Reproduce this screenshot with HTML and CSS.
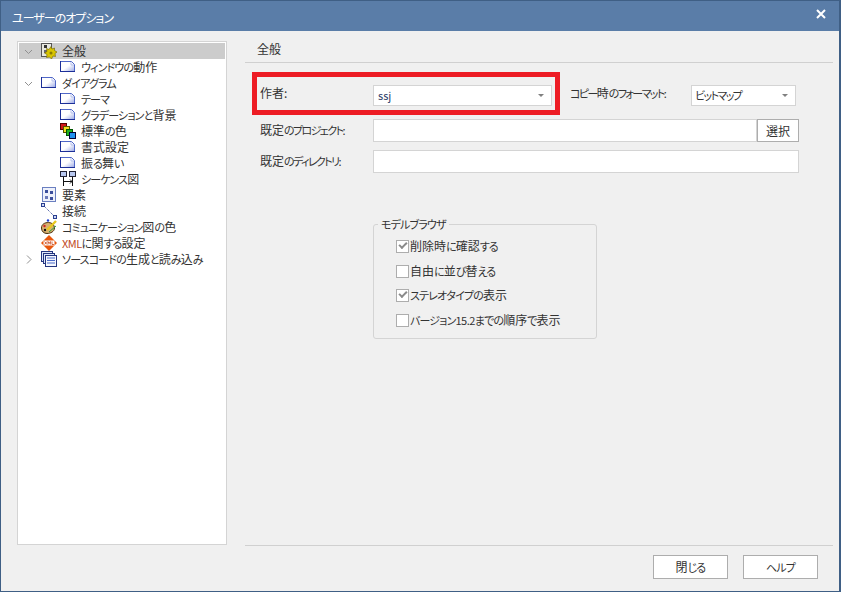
FILE: index.html
```html
<!DOCTYPE html>
<html lang="ja">
<head>
  <meta charset="UTF-8" />
  <title>ユーザーのオプション</title>
  <link rel="stylesheet" href="styles.css">
</head>
<body>

  <svg class="defs" width="0" height="0">
    <defs>
      <linearGradient id="pageFill" x1="0" y1="0" x2="1" y2="1">
        <stop offset="0.5" stop-color="#ffffff"/>
        <stop offset="1" stop-color="#98a6e4"/>
      </linearGradient>
      <symbol id="page" viewBox="0 0 16 16">
        <path d="M0.5 2.5H11.5L14.5 5.5V12.5H0.5Z" fill="url(#pageFill)" stroke="#5068c8"/>
        <path d="M0.5 2V13M0 12.5H15" stroke="#1c2f98"/>
        <path d="M11 3V6H14" fill="none" stroke="#b4c0ee"/>
      </symbol>
      <symbol id="general" viewBox="0 0 16 16">
        <rect x="0.5" y="0.5" width="10" height="13" fill="#e8e8e0" stroke="#555"/>
        <rect x="3" y="2" width="3" height="3" fill="#333"/>
        <rect x="3" y="7" width="3" height="3" fill="#667"/>
        <path d="M10 3.5L11 6L13.5 5L13.5 7.5L16 9L14 10.5L14.5 13.5L12 13L10.5 16L8.5 14L5.5 14.5L6 11.5L3.5 10L6 8.5L5.5 5.5L8 6.5Z" fill="#d8c400" stroke="#6b6000" stroke-width="0.6"/>
        <circle cx="10" cy="10" r="1.5" fill="#8a7c00"/>
      </symbol>
      <symbol id="colors" viewBox="0 0 16 16">
        <rect x="0.5" y="0.5" width="6" height="6" fill="#d01818" stroke="#500"/>
        <rect x="3.5" y="3.5" width="6" height="6" fill="#f0e020" stroke="#550"/>
        <rect x="6.5" y="6.5" width="6" height="6" fill="#20b020" stroke="#050"/>
        <rect x="9.5" y="9.5" width="6" height="6" fill="#2090f0" stroke="#003"/>
      </symbol>
      <symbol id="sequence" viewBox="0 0 16 16">
        <rect x="0.5" y="0.5" width="6" height="5" fill="#b8c8f0" stroke="#223"/>
        <rect x="9.5" y="0.5" width="6" height="5" fill="#b8c8f0" stroke="#223"/>
        <path d="M3.5 6V15M12.5 6V15M4 10.5H12M10 8.5L12 10.5L10 12.5" fill="none" stroke="#111"/>
      </symbol>
      <symbol id="element" viewBox="0 0 16 16">
        <rect x="1.5" y="0.5" width="13" height="14" fill="#eef1fb" stroke="#6a7fc0"/>
        <rect x="4" y="3" width="3" height="3" fill="#3c4f9c"/>
        <rect x="9" y="4" width="3" height="3" fill="#3c4f9c"/>
        <rect x="4" y="9" width="3" height="3" fill="#6a78b8"/>
        <rect x="9" y="10" width="3" height="3" fill="#3c4f9c"/>
      </symbol>
      <symbol id="connector" viewBox="0 0 16 16">
        <path d="M3 3L13 13" stroke="#2a3f90" stroke-dasharray="1 1"/>
        <rect x="0.5" y="0.5" width="3" height="3" fill="#cfd8f5" stroke="#2a3f90"/>
        <rect x="12.5" y="12.5" width="3" height="3" fill="#cfd8f5" stroke="#2a3f90"/>
      </symbol>
      <symbol id="palette" viewBox="0 0 16 16">
        <path d="M0.5 9C0.5 5 4 3.5 7.5 3.5C11 3.5 13.5 6 13.5 9C13.5 12.5 9.5 14.5 6 14.5C3 14.5 0.5 12.5 0.5 9Z" fill="#d8b070" stroke="#4a3210"/>
        <circle cx="3.5" cy="7" r="1.2" fill="#d02020"/>
        <circle cx="7" cy="1.5" r="1.2" fill="#2040d0"/>
        <circle cx="4" cy="11" r="1.2" fill="#111"/>
        <path d="M6 11L15 2" stroke="#e8c820" stroke-width="2.4"/>
        <path d="M8 13L15 7" stroke="#30a040"/>
      </symbol>
      <symbol id="xml" viewBox="0 0 16 16">
        <path d="M8 0L16 8L8 16L0 8Z" fill="#e8560c"/>
        <path d="M2.5 5.5H13.5V10.5H2.5Z" fill="#fff"/>
        <path d="M3.5 6.5L6 9.5M6 6.5L3.5 9.5M7 9.5V6.5L8.2 8.5L9.4 6.5V9.5M11 6.5V9.5H13" stroke="#c03000" stroke-width="0.7" fill="none"/>
      </symbol>
      <symbol id="source" viewBox="0 0 16 16">
        <rect x="0.5" y="0.5" width="11" height="10" fill="#dfe6f8" stroke="#24357f"/>
        <rect x="2.5" y="2.5" width="11" height="10" fill="#dfe6f8" stroke="#24357f"/>
        <rect x="4.5" y="4.5" width="11" height="11" fill="#f4f6fd" stroke="#24357f"/>
        <path d="M6 7H14M6 9.5H14M6 12H14" stroke="#4a6ac8"/>
      </symbol>
      <symbol id="open" viewBox="0 0 9 9">
        <path d="M1 3L4.5 6.5L8 3" fill="none" stroke="#909090"/>
      </symbol>
      <symbol id="closed" viewBox="0 0 9 9">
        <path d="M3 0.5L7 4.5L3 8.5" fill="none" stroke="#909090"/>
      </symbol>
    </defs>
  </svg>

  <div class="window">
    <div class="titlebar">
      <span class="title">ユーザーのオプション</span>
      <svg class="close" width="10" height="10" viewBox="0 0 10 10"><path d="M1 1L9 9M9 1L1 9" stroke="#fff" stroke-width="2"/></svg>
    </div>

    <div class="content">
      <ul class="tree">
        <li class="node selected"><svg class="arrow"><use href="#open"/></svg><svg class="icon"><use href="#general"/></svg>全般</li>
        <li class="node child"><svg class="icon"><use href="#page"/></svg><span><span class="k">ウィンドウの</span>動作</span></li>
        <li class="node"><svg class="arrow"><use href="#open"/></svg><svg class="icon"><use href="#page"/></svg><span class="k">ダイアグラム</span></li>
        <li class="node child"><svg class="icon"><use href="#page"/></svg><span class="k">テーマ</span></li>
        <li class="node child"><svg class="icon"><use href="#page"/></svg><span><span class="k">グラデーションと</span>背景</span></li>
        <li class="node child"><svg class="icon"><use href="#colors"/></svg><span>標準<span class="k">の</span>色</span></li>
        <li class="node child"><svg class="icon"><use href="#page"/></svg>書式設定</li>
        <li class="node child"><svg class="icon"><use href="#page"/></svg><span>振<span class="k">る</span>舞<span class="k">い</span></span></li>
        <li class="node child"><svg class="icon"><use href="#sequence"/></svg><span><span class="k">シーケンス</span>図</span></li>
        <li class="node leaf"><svg class="icon"><use href="#element"/></svg>要素</li>
        <li class="node leaf"><svg class="icon"><use href="#connector"/></svg>接続</li>
        <li class="node leaf"><svg class="icon"><use href="#palette"/></svg><span><span class="k">コミュニケーション</span>図<span class="k">の</span>色</span></li>
        <li class="node leaf"><svg class="icon"><use href="#xml"/></svg><span><span class="xml">XML</span><span class="k">に</span>関<span class="k">する</span>設定</span></li>
        <li class="node"><svg class="arrow"><use href="#closed"/></svg><svg class="icon"><use href="#source"/></svg><span><span class="k">ソースコードの</span>生成<span class="k">と</span>読<span class="k">み</span>込<span class="k">み</span></span></li>
      </ul>

      <div class="panel">
        <h2 class="panel-title">全般</h2>

        <div class="top-row">
          <div class="author-box">
            <label class="author-label">作者:</label>
            <div class="combo author-combo">ssj<span class="caret"></span></div>
          </div>
          <label class="format-label"><span class="k tight">コピー</span>時<span class="k tight">のフォーマット:</span></label>
          <div class="combo format-combo"><span class="k tight">ビットマップ</span><span class="caret"></span></div>
        </div>

        <div class="field project-field">
          <label>既定<span class="k tight">のプロジェクト:</span></label>
          <div class="input"></div>
          <button class="pick">選択</button>
        </div>

        <div class="field dir-field">
          <label>既定<span class="k tight">のディレクトリ:</span></label>
          <div class="input"></div>
        </div>

        <fieldset class="group">
          <legend><span class="k">モデルブラウザ</span></legend>
          <div class="check on">削除時<span class="k">に</span>確認<span class="k">する</span></div>
          <div class="check">自由<span class="k">に</span>並<span class="k">び</span>替<span class="k">える</span></div>
          <div class="check on"><span class="k">ステレオタイプの</span>表示</div>
          <div class="check"><span class="k">バージョン</span><span class="num">15.2</span><span class="k">までの</span>順序<span class="k">で</span>表示</div>
        </fieldset>

        <div class="footer">
          <button class="btn">閉<span class="k">じる</span></button>
          <button class="btn"><span class="k">ヘルプ</span></button>
        </div>
      </div>
    </div>
  </div>

</body>
</html>
```

FILE: styles.css
```css
* {
  margin: 0;
  padding: 0;
  box-sizing: border-box;
}

body {
  font-family: "Noto Sans CJK JP", "Noto Sans", sans-serif;
  font-size: 12px;
  line-height: 16px;
  font-feature-settings: "palt";
  color: #333;
  background: #f0f0f0;
  overflow: hidden;
}

.defs {
  position: absolute;
}

/* kana runs are set narrower than the kanji */
.k {
  font-size: 11px;
  letter-spacing: -0.85px;
}

.k.tight {
  letter-spacing: -1.6px;
}

.num {
  font-size: 11px;
  letter-spacing: -0.5px;
}

.window {
  width: 841px;
  height: 592px;
  display: flex;
  flex-direction: column;
  border: 1px solid #3f5f85;
  border-right-width: 2px;
  background: #f0f0f0;
}

.titlebar {
  height: 30px;
  flex: none;
  display: flex;
  align-items: center;
  justify-content: space-between;
  padding: 4px 13px 0 11px;
  background: #5a7da8;
  color: #fff;
}

.title {
  letter-spacing: -1px;
}

.close {
  margin-top: -9px;
}

.content {
  flex: 1;
  display: flex;
  padding: 10px 6px 0 16px;
}

/* tree on the left */
.tree {
  width: 210px;
  height: 504px;
  flex: none;
  list-style: none;
  padding: 1px;
  background: #fff;
  border: 1px solid #d4d4d4;
}

.node {
  height: 16px;
  display: flex;
  align-items: center;
  white-space: nowrap;
  padding-left: 5px;
}

.node.selected {
  background: #ccc;
}

.node.child {
  padding-left: 41px;
}

.node.leaf {
  padding-left: 22px;
}

.arrow {
  width: 9px;
  height: 9px;
  flex: none;
  margin-right: 8px;
}

.icon {
  width: 16px;
  height: 16px;
  margin-right: 5px;
  flex: none;
}

.xml {
  color: #c0481c;
  font-size: 11px;
  letter-spacing: -0.5px;
}

/* right panel */
.panel {
  width: 588px;
  margin-left: 18px;
  display: flex;
  flex-direction: column;
}

.panel-title {
  height: 22px;
  padding-left: 12px;
  font-size: 12px;
  font-weight: normal;
  border-bottom: 1px solid #d0d0d0;
}

.top-row {
  display: flex;
  align-items: flex-start;
  margin: 9px 0 0 7px;
}

.author-box {
  width: 308px;
  height: 43px;
  display: flex;
  align-items: center;
  border: 5px solid #ed1c24;
  padding: 3px 0 0 3px;
}

.author-label {
  width: 113px;
  margin-top: -4px;
}

.combo {
  position: relative;
  height: 21px;
  background: #fff;
  border: 1px solid #d4d4d4;
  padding: 1px 0 0 4px;
  font-size: 11px;
}

.author-combo {
  width: 179px;
  color: #2a3a66;
}

.caret {
  position: absolute;
  right: 7px;
  top: 8px;
  border: 3px solid transparent;
  border-top: 3px solid #808080;
  border-bottom: 0;
}

.format-label {
  width: 121px;
  margin: 13px 0 0 10px;
  white-space: nowrap;
}

.format-combo {
  width: 105px;
  margin-top: 13px;
  padding-left: 3px;
}

.field {
  display: flex;
  align-items: center;
  margin-left: 15px;
  height: 23px;
}

.field label {
  width: 113px;
  flex: none;
  margin-top: -2px;
  white-space: nowrap;
}

.input {
  height: 23px;
  background: #fff;
  border: 1px solid #d4d4d4;
}

.project-field {
  margin-top: 4px;
}

.project-field .input {
  width: 384px;
}

.pick {
  width: 42px;
  height: 23px;
  font: inherit;
  color: #333;
  background: #fff;
  border: 1px solid #adadad;
}

.dir-field {
  margin-top: 8px;
}

.dir-field .input {
  width: 426px;
}

.group {
  width: 224px;
  height: 123px;
  margin: 43px 0 0 128px;
  padding: 6px 0 0 22px;
  border: 1px solid #d4d4d4;
  border-radius: 3px;
}

.group legend {
  margin-left: -18px;
  padding: 0 3px;
}

.check {
  position: relative;
  height: 24.5px;
  padding-left: 14px;
  white-space: nowrap;
}

.check::before {
  content: "";
  position: absolute;
  left: 0;
  top: 2px;
  width: 11px;
  height: 11px;
  background: #fff;
  border: 1px solid #adadad;
}

.check.on::after {
  content: "";
  position: absolute;
  left: 3px;
  top: 4px;
  width: 6px;
  height: 3px;
  border-left: 2px solid #8a8a8a;
  border-bottom: 2px solid #8a8a8a;
  transform: rotate(-45deg);
}

.footer {
  margin-top: auto;
  height: 46px;
  display: flex;
  justify-content: flex-end;
  gap: 15px;
  padding: 9px 15px 0 0;
  border-top: 1px solid #d0d0d0;
}

.btn {
  width: 75px;
  height: 24px;
  font: inherit;
  color: #333;
  background: #fff;
  border: 1px solid #adadad;
}
```
